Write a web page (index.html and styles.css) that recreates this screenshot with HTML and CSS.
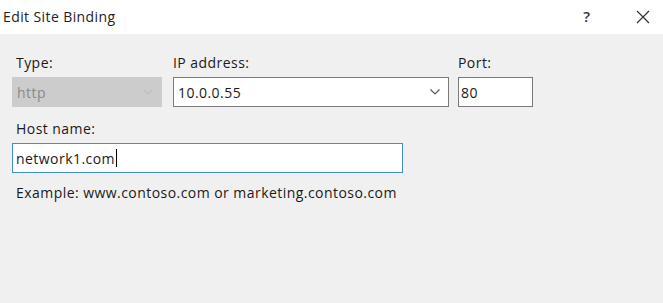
FILE: index.html
```html
<!DOCTYPE html>
<html>
<head>
<meta charset="utf-8">
<link rel="stylesheet" href="styles.css">
</head>
<body>
<div class="dialog">
  <div class="titlebar">
    <span class="title">Edit Site Binding</span>
    <div class="tb-buttons">
      <span class="help">?</span>
      <svg class="close" width="14" height="14" viewBox="0 0 14 14"><path d="M1 1 L13 13 M13 1 L1 13" stroke="#333" stroke-width="1.2" fill="none"/></svg>
    </div>
  </div>
  <div class="content">
    <div class="row">
      <div class="field f-type">
        <label class="lbl">Type:</label>
        <div class="select disabled"><span>http</span>
          <svg class="chev" width="10" height="6" viewBox="0 0 10 6"><path d="M0.5 0.5 L5 5 L9.5 0.5" stroke="#bdbdbd" stroke-width="1.1" fill="none"/></svg>
        </div>
      </div>
      <div class="field f-ip">
        <label class="lbl">IP address:</label>
        <div class="select"><span>10.0.0.55</span>
          <svg class="chev" width="10" height="6" viewBox="0 0 10 6"><path d="M0.5 0.5 L5 5 L9.5 0.5" stroke="#555" stroke-width="1.1" fill="none"/></svg>
        </div>
      </div>
      <div class="field f-port">
        <label class="lbl">Port:</label>
        <div class="input"><span>80</span></div>
      </div>
    </div>
    <div class="field f-host">
      <label class="lbl">Host name:</label>
      <div class="input focused"><span>network1.com</span><span class="caret"></span></div>
    </div>
    <div class="example">Example: www.contoso.com or marketing.contoso.com</div>
  </div>
</div>
</body>
</html>
```
FILE: styles.css
```css
html, body {
  margin: 0;
  padding: 0;
  background: #f0f0f0;
  font-family: "Open Sans", "Noto Sans", sans-serif;
  color: #1a1a1a;
}
.dialog {
  width: 663px;
  height: 303px;
  display: flex;
  flex-direction: column;
}
.titlebar {
  height: 34px;
  background: #ffffff;
  display: flex;
  align-items: center;
  justify-content: space-between;
  padding-left: 3px;
  padding-right: 13px;
  box-sizing: border-box;
}
.title {
  font-size: 14px;
  letter-spacing: 0.4px;
  color: #222;
  margin-top: -2px;
}
.tb-buttons {
  display: flex;
  align-items: center;
  gap: 46px;
}
.help {
  font-size: 15px;
  font-weight: 600;
  color: #333;
  margin-top: -2px;
}
.close {
  display: block;
}
.content {
  padding: 20px 0 0 12px;
}
.row {
  display: flex;
  gap: 11px;
}
.field {
  display: flex;
  flex-direction: column;
}
.lbl, .select, .input, .example {
  font-size: 14px;
  letter-spacing: 0.45px;
}
.lbl {
  line-height: 18px;
  padding-left: 0;
  margin-bottom: 5px;
  color: #1a1a1a;
}
.f-type .lbl { padding-left: 4px; }
.select, .input {
  height: 30px;
  box-sizing: border-box;
  border: 1px solid #7a7a7a;
  background: #fff;
  display: flex;
  align-items: center;
  padding-left: 4px;
}
.select {
  justify-content: space-between;
  padding-right: 8px;
}
.select.disabled {
  background: #cccccc;
  border-color: #cccccc;
  color: #8a8a8a;
}
.f-type .select { width: 150px; }
.f-ip .select { width: 276px; }
.f-port { margin-left: -2px; }
.f-port .input { width: 75px; padding-left: 2px; }
.f-host { margin-top: 13px; }
.f-host .lbl { padding-left: 4px; }
.f-host .input { width: 391px; padding-left: 3px; }
.input.focused {
  border-color: #3f8fd8;
}
.caret {
  display: inline-block;
  width: 1px;
  height: 18px;
  background: #000;
  margin-left: 1px;
}
.example {
  padding-left: 4px;
  margin-top: 10px;
  color: #1a1a1a;
}
```
